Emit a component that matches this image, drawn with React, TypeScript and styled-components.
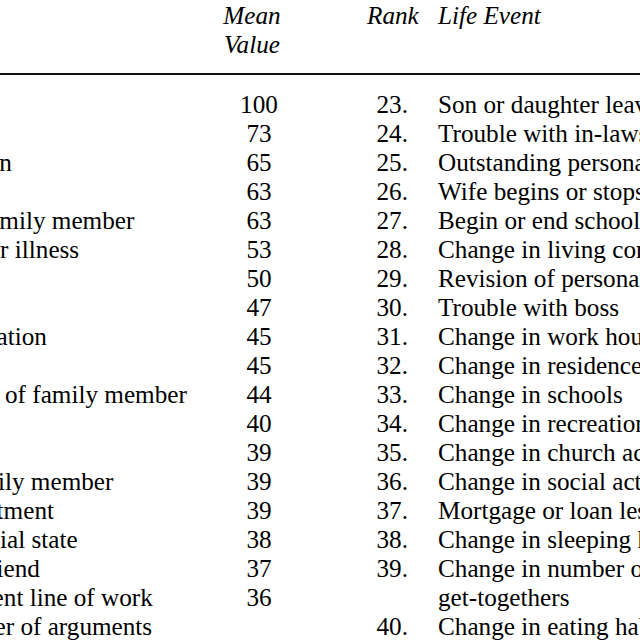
import styled, { createGlobalStyle } from 'styled-components';

type Item = { rank: number; event: string; value: number };

const events: Item[] = [
  { rank: 1, event: 'Death of spouse', value: 100 },
  { rank: 2, event: 'Divorce', value: 73 },
  { rank: 3, event: 'Marital separation', value: 65 },
  { rank: 4, event: 'Jail term', value: 63 },
  { rank: 5, event: 'Death of close family member', value: 63 },
  { rank: 6, event: 'Personal injury or illness', value: 53 },
  { rank: 7, event: 'Marriage', value: 50 },
  { rank: 8, event: 'Fired at work', value: 47 },
  { rank: 9, event: 'Marital reconciliation', value: 45 },
  { rank: 10, event: 'Retirement', value: 45 },
  { rank: 11, event: 'Change in health of family member', value: 44 },
  { rank: 12, event: 'Pregnancy', value: 40 },
  { rank: 13, event: 'Sex difficulties', value: 39 },
  { rank: 14, event: 'Gain of new family member', value: 39 },
  { rank: 15, event: 'Business readjustment', value: 39 },
  { rank: 16, event: 'Change in financial state', value: 38 },
  { rank: 17, event: 'Death of close friend', value: 37 },
  { rank: 18, event: 'Change to different line of work', value: 36 },
  { rank: 19, event: 'Change in number of arguments with spouse', value: 35 },
  { rank: 20, event: 'Mortgage over $10,000', value: 31 },
  { rank: 21, event: 'Foreclosure of mortgage or loan', value: 30 },
  { rank: 22, event: 'Change in responsibilities at work', value: 29 },
  { rank: 23, event: 'Son or daughter leaving home', value: 29 },
  { rank: 24, event: 'Trouble with in-laws', value: 29 },
  { rank: 25, event: 'Outstanding personal achievement', value: 28 },
  { rank: 26, event: 'Wife begins or stops work', value: 26 },
  { rank: 27, event: 'Begin or end school', value: 26 },
  { rank: 28, event: 'Change in living conditions', value: 25 },
  { rank: 29, event: 'Revision of personal habits', value: 24 },
  { rank: 30, event: 'Trouble with boss', value: 23 },
  { rank: 31, event: 'Change in work hours or conditions', value: 20 },
  { rank: 32, event: 'Change in residence', value: 20 },
  { rank: 33, event: 'Change in schools', value: 20 },
  { rank: 34, event: 'Change in recreation', value: 19 },
  { rank: 35, event: 'Change in church activities', value: 19 },
  { rank: 36, event: 'Change in social activities', value: 18 },
  { rank: 37, event: 'Mortgage or loan less than $10,000', value: 17 },
  { rank: 38, event: 'Change in sleeping habits', value: 16 },
  { rank: 39, event: 'Change in number of family get-togethers', value: 15 },
  { rank: 40, event: 'Change in eating habits', value: 15 },
];

const GlobalStyle = createGlobalStyle`
  html, body {
    margin: 0;
    padding: 0;
    background: #ffffff;
  }

  body {
    font-family: 'Liberation Serif', 'Times New Roman', serif;
    color: #000000;
  }
`;

const SViewport = styled.div`
  width: 640px;
  height: 640px;
  overflow: hidden;
`;

const STable = styled.div`
  width: 1220px;
  margin-left: -248px;
  font-size: 25.2px;
  line-height: 29px;
`;

const SHalves = styled.div`
  display: flex;
`;

const SHead = styled(SHalves)`
  padding: 1px 0 14px;
  border-bottom: 2px solid #111111;
`;

const SBody = styled(SHalves)`
  padding-top: 15px;
`;

const SHalf = styled.div`
  width: 610px;
  display: grid;
  grid-template-columns: 76px 365px 169px;
  align-content: start;
`;

const SHeadCell = styled.div<{ $align?: 'left' | 'center'; $padLeft?: number; $padRight?: number }>`
  font-style: italic;
  text-align: ${({ $align }) => $align ?? 'left'};
  padding-left: ${({ $padLeft }) => $padLeft ?? 0}px;
  padding-right: ${({ $padRight }) => $padRight ?? 0}px;
`;

const SRow = styled.div`
  display: contents;
`;

const SRank = styled.div`
  text-align: right;
  padding-right: 30px;
`;

const SEvent = styled.div``;

const SNoBreak = styled.span`
  white-space: nowrap;
`;

const SValue = styled.div`
  align-self: end;
  text-align: center;
  padding-right: 37px;
`;

// keep hyphenated words such as "get-togethers" on one line
const renderEvent = (event: string) =>
  event.split(' ').map((word, i) => (
    <span key={i}>
      {i > 0 ? ' ' : ''}
      {word.includes('-') ? <SNoBreak>{word}</SNoBreak> : word}
    </span>
  ));

const HeadHalf = () => (
  <SHalf>
    <SHeadCell $padLeft={5}>Rank</SHeadCell>
    <SHeadCell>Life Event</SHeadCell>
    <SHeadCell $align='center' $padRight={51}>
      Mean
      <br />
      Value
    </SHeadCell>
  </SHalf>
);

const BodyHalf = ({ items }: { items: Item[] }) => (
  <SHalf>
    {items.map(({ rank, event, value }) => (
      <SRow key={rank}>
        <SRank>{rank}.</SRank>
        <SEvent>{renderEvent(event)}</SEvent>
        <SValue>{value}</SValue>
      </SRow>
    ))}
  </SHalf>
);

const App = () => (
  <>
    <GlobalStyle />
    <SViewport>
      <STable>
        <SHead>
          <HeadHalf />
          <HeadHalf />
        </SHead>
        <SBody>
          <BodyHalf items={events.slice(0, 22)} />
          <BodyHalf items={events.slice(22)} />
        </SBody>
      </STable>
    </SViewport>
  </>
);

export default App;
